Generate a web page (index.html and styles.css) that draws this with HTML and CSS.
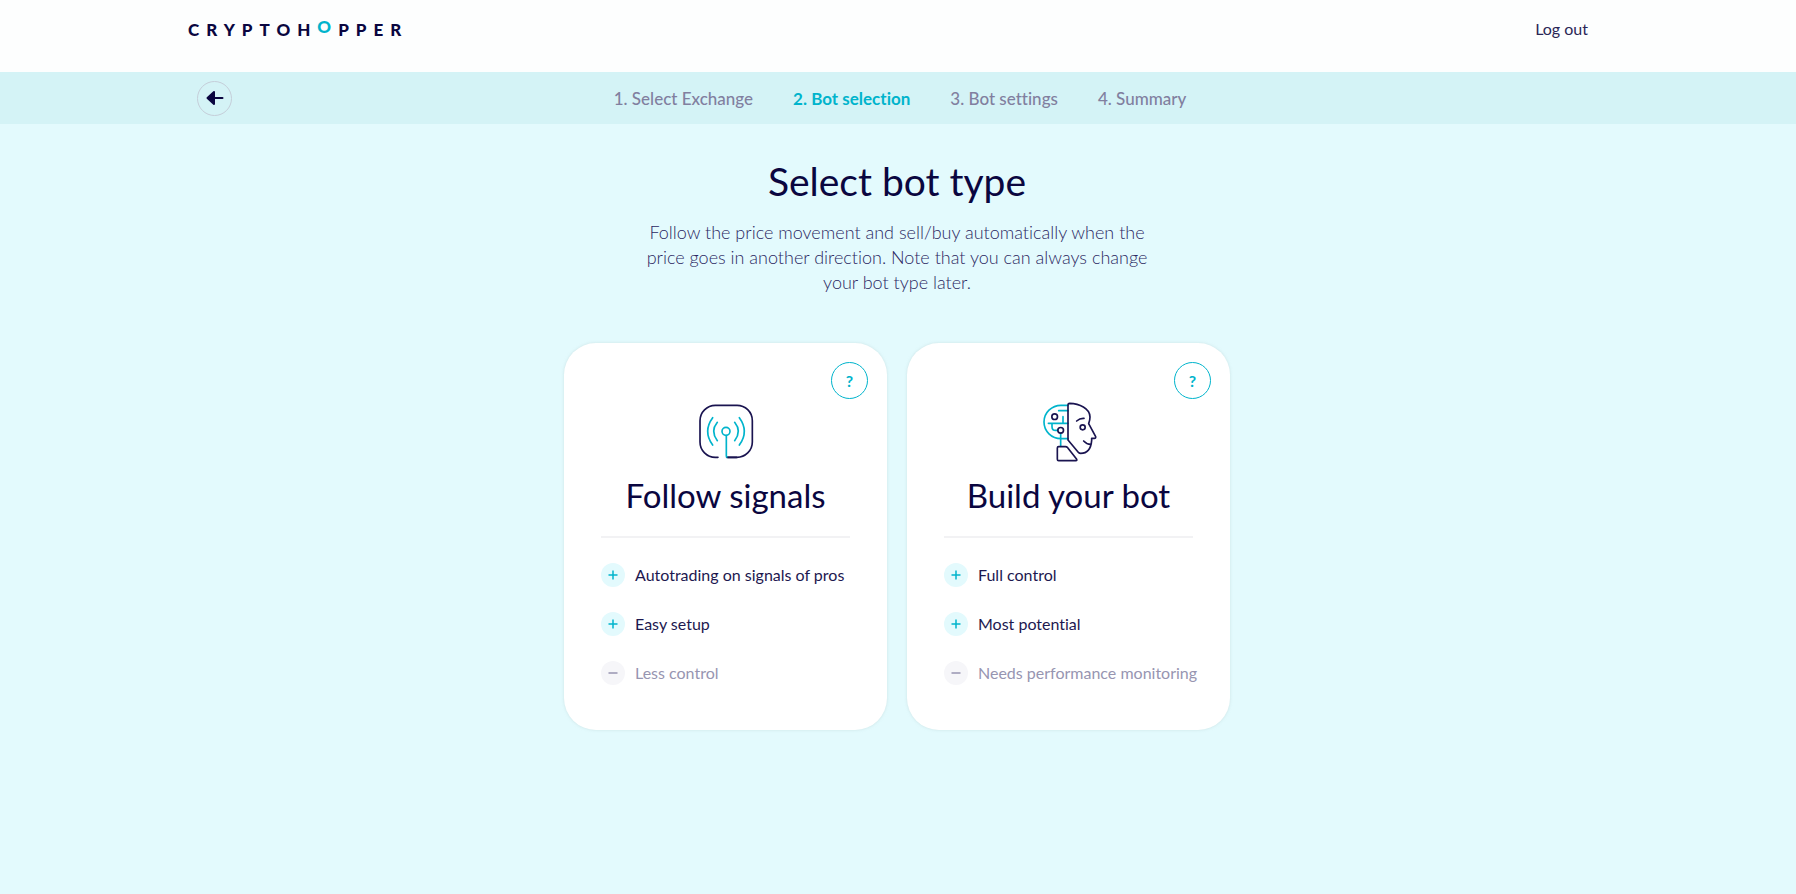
FILE: index.html
```html
<!DOCTYPE html>
<html lang="en">
<head>
<meta charset="utf-8">
<meta name="viewport" content="width=device-width, initial-scale=1">
<title>Cryptohopper - Select bot type</title>
<link rel="stylesheet" href="styles.css">
</head>
<body>
<header class="header">
  <div class="container header-inner">
    <div class="logo"><span>CRYPTOH</span><span class="logo-ring">O</span><span>PPER</span></div>
    <a class="logout" href="#">Log out</a>
  </div>
</header>
<nav class="steps-bar" aria-label="Setup steps">
  <div class="container steps-inner">
    <button class="back" type="button" aria-label="Back">
      <svg viewBox="0 0 18 16" width="18" height="16" aria-hidden="true"><path d="M1.5 8 8 2v12z" fill="currentColor" stroke="currentColor" stroke-width="2" stroke-linejoin="round"/><path d="M8 8h8.500" fill="none" stroke="currentColor" stroke-width="2" stroke-linecap="round"/></svg>
    </button>
    <ol class="steps">
      <li>1. Select Exchange</li>
      <li class="active" aria-current="step">2. Bot selection</li>
      <li>3. Bot settings</li>
      <li>4. Summary</li>
    </ol>
  </div>
</nav>
<main class="main">
  <h1 class="title">Select bot type</h1>
  <p class="intro">Follow the price movement and sell/buy automatically when the price goes in another direction. Note that you can always change your bot type later.</p>
  <div class="cards">
    <section class="card">
      <button class="help" type="button" aria-label="Help: Follow signals">?</button>
      <svg class="card-icon" viewBox="30 30 180 186" aria-hidden="true">
        <path class="navy" d="M96 199H88A46 46 0 0 1 42 153V89A46 46 0 0 1 88 43H152A46 46 0 0 1 199 89V153A46 46 0 0 1 152 199H122"/>
        <g class="cyan"><circle cx="120" cy="121" r="12"/><path d="M121 134V194Q121 199 126 199M80 80Q50 121 80 162M94 94Q72 121 94 149M160 80Q190 121 160 162M146 94Q168 121 146 149"/></g>
        <path class="navy" d="M126 199H152"/>
      </svg>
      <h2 class="card-title">Follow signals</h2>
      <ul class="features">
        <li><span class="mark"><svg viewBox="0 0 10 10"><path d="M5 .5v9M.5 5h9"/></svg></span>Autotrading on signals of pros</li>
        <li><span class="mark"><svg viewBox="0 0 10 10"><path d="M5 .5v9M.5 5h9"/></svg></span>Easy setup</li>
        <li class="minus"><span class="mark"><svg viewBox="0 0 10 10"><path d="M.5 5h9"/></svg></span>Less control</li>
      </ul>
    </section>
    <section class="card">
      <button class="help" type="button" aria-label="Help: Build your bot">?</button>
      <svg class="card-icon" viewBox="26 30 180 186" aria-hidden="true">
        <path class="cyan" d="M113 43H92A51 50 0 0 0 92 143H113M85 59H113M54 97H113M98 77V97M65 97V107Q65 118 76 118H82M91 127V166"/>
        <g class="navy"><circle cx="73" cy="77" r="8.500"/><circle cx="91" cy="118" r="8.500"/><circle cx="157" cy="109" r="7.500"/>
        <path d="M113 41Q113 37 118 37C146 38 179 51 179 78C179 88 177 93 175 98L196 137Q197 142 192 142H184V148C182 173 172 187 151 187Q147 187 145 185L113 147ZM139 90Q149 81 161 82M160 150Q169 160 181 160M85 167H105Q109 167 112 170L138 203Q142 209 136 209H85Q81 209 81 205V171Q81 167 85 167Z"/></g>
      </svg>
      <h2 class="card-title">Build your bot</h2>
      <ul class="features">
        <li><span class="mark"><svg viewBox="0 0 10 10"><path d="M5 .5v9M.5 5h9"/></svg></span>Full control</li>
        <li><span class="mark"><svg viewBox="0 0 10 10"><path d="M5 .5v9M.5 5h9"/></svg></span>Most potential</li>
        <li class="minus"><span class="mark"><svg viewBox="0 0 10 10"><path d="M.5 5h9"/></svg></span>Needs performance monitoring</li>
      </ul>
    </section>
  </div>
</main>
</body>
</html>
```
FILE: styles.css
```css
* { box-sizing: border-box; }
body {
  margin: 0;
  min-height: 100vh;
  background: #e3fafd;
  color: #0a0640;
  font-family: Lato, "Open Sans", sans-serif;
  font-size: 16px;
  font-variant-ligatures: none;
}
ol, ul { list-style: none; margin: 0; padding: 0; }
button { font: inherit; cursor: pointer; padding: 0; background: none; }
.container { max-width: 1440px; margin: 0 auto; }
.header { background: #fdfefe; height: 72px; }
.header-inner {
  display: flex;
  justify-content: space-between;
  align-items: flex-start;
  padding: 17px 30px 0 10px;
}
.logo {
  display: flex;
  font-size: 17px;
  line-height: 26px;
  font-weight: 900;
  letter-spacing: 7px;
}
.logo-ring { color: #00b4cc; line-height: 20px; }
.logout { color: #2b2756; text-decoration: none; line-height: 24px; }
.steps-bar { background: #d4f3f6; }
.steps-inner {
  display: grid;
  grid-template-columns: 1fr auto 1fr;
  align-items: center;
  min-height: 52px;
  padding: 0 19px;
}
.back {
  display: grid;
  place-items: center;
  width: 35px;
  height: 35px;
  border: 1px solid #c5ced9;
  border-radius: 50%;
  color: #0a0640;
}
.steps {
  display: flex;
  gap: 40px;
  padding: 2px 0 0 4px;
  font-size: 17px;
  line-height: 24px;
  font-weight: 500;
  color: #817f9f;
}
.active { color: #00b4cc; font-weight: 700; }
.main { text-align: center; padding: 31px 22px 40px 20px; }
.title { margin: 0; font-size: 39px; line-height: 52px; font-weight: 400; }
.intro {
  max-width: 520px;
  margin: 13px auto 0;
  font-size: 18px;
  line-height: 25px;
  font-weight: 300;
  color: #2b2862;
}
.cards {
  display: grid;
  grid-template-columns: repeat(2, 323px);
  justify-content: center;
  gap: 20px;
  margin-top: 48px;
}
.card {
  position: relative;
  padding: 58px 37px 45px;
  background: #fff;
  border-radius: 32px;
  box-shadow: 0 0 3px rgba(180, 205, 205, .5);
}
.help {
  position: absolute;
  top: 19px;
  right: 19px;
  width: 37px;
  height: 37px;
  border: 1px solid #00b4cc;
  border-radius: 50%;
  color: #00b4cc;
  font-weight: 700;
}
.card-icon { display: block; width: 60px; height: 62px; margin: 0 auto; fill: none; stroke-width: 5; stroke-linecap: round; stroke-linejoin: round; }
.navy { stroke: #1a1450; }
.cyan { stroke: #00b4cc; }
.card-title {
  margin: 11px 0 0;
  padding-bottom: 20px;
  border-bottom: 2px solid #f2f2f4;
  font-size: 33px;
  line-height: 42px;
  font-weight: 400;
}
.features { display: grid; gap: 25px; margin-top: 25px; }
.features li {
  display: flex;
  align-items: center;
  gap: 10px;
  line-height: 24px;
  white-space: nowrap;
  color: #1d184f;
}
.features .minus { color: #9795b1; }
.mark {
  display: grid;
  place-items: center;
  width: 24px;
  height: 24px;
  border-radius: 50%;
  background: #e3fafd;
  color: #00b4cc;
}
.minus .mark { background: #f6f6f9; color: #9795b1; }
.mark svg { width: 10px; height: 10px; fill: none; stroke: currentColor; stroke-width: 1.500; }
```
